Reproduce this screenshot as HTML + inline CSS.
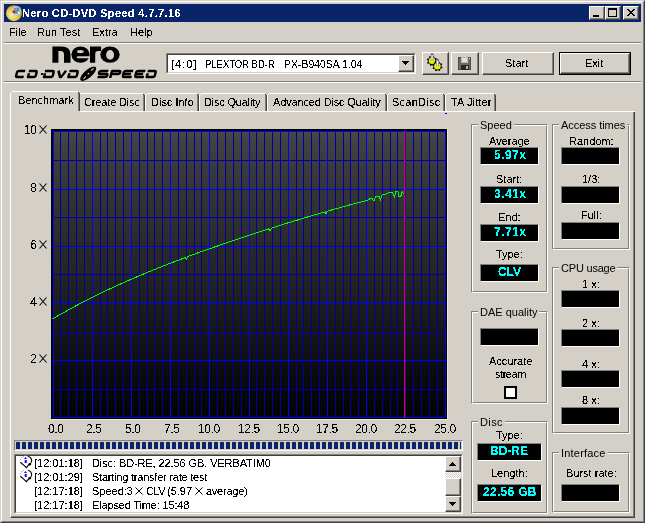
<!DOCTYPE html>
<html><head><meta charset="utf-8">
<style>
*{margin:0;padding:0;box-sizing:border-box}
html,body{width:645px;height:523px;overflow:hidden;background:#d4d0c8}
body{position:relative;font-family:"Liberation Sans",sans-serif;font-size:11px;color:#000}
.a{position:absolute}
.t{position:absolute;white-space:nowrap;line-height:13px;font-size:11px;filter:url(#crisp)}
.btn{position:absolute;background:#d4d0c8;border-top:1px solid #fff;border-left:1px solid #fff;border-right:1px solid #404040;border-bottom:1px solid #404040}
.btn>i{position:absolute;left:0;top:0;right:0;bottom:0;border-right:1px solid #808080;border-bottom:1px solid #808080}
.sunk{position:absolute;border-top:1px solid #808080;border-left:1px solid #808080;border-right:1px solid #fff;border-bottom:1px solid #fff}
.sunk>i{position:absolute;left:0;top:0;right:0;bottom:0;border-top:1px solid #404040;border-left:1px solid #404040;border-right:1px solid #d4d0c8;border-bottom:1px solid #d4d0c8}
.grp{position:absolute;border-top:1px solid #808080;border-left:1px solid #808080;border-right:1px solid #fff;border-bottom:1px solid #fff}
.grp>i{position:absolute;left:0;top:0;right:0;bottom:0;border-top:1px solid #fff;border-left:1px solid #fff;border-right:1px solid #808080;border-bottom:1px solid #808080}
.lab{position:absolute;white-space:nowrap;line-height:13px;background:#d4d0c8;padding:0 2px;filter:url(#crisp)}
.box{position:absolute;background:#000;border-top:1px solid #808080;border-left:1px solid #808080;border-right:1px solid #fff;border-bottom:1px solid #fff;width:59px;height:18px}
.val{position:absolute;left:0;right:0;text-align:center;color:#00ffff;font-weight:bold;font-size:12px;line-height:14px;top:0px;filter:url(#crisp)}
.c{text-align:center}
.tab{position:absolute;top:93px;height:18px;border-top:1px solid #fff;border-left:1px solid #fff}
.tab>b{position:absolute;top:0;bottom:0;right:-1px;width:1px;background:#404040}
.tab>i{position:absolute;top:0;bottom:0;right:0;width:1px;background:#808080}
</style></head><body>
<svg width="0" height="0" style="position:absolute"><filter id="crisp" x="-5%" y="-5%" width="110%" height="110%" color-interpolation-filters="sRGB"><feComponentTransfer><feFuncA type="discrete" tableValues="0 0 0 0 0 0 0 0 0 1 1 1 1 1 1 1 1 1 1 1"/></feComponentTransfer></filter></svg>

<!-- window frame -->
<div class="a" style="left:0;top:0;width:645px;height:523px;border-top:1px solid #d4d0c8;border-left:1px solid #d4d0c8;border-right:1px solid #404040;border-bottom:1px solid #404040"></div>
<div class="a" style="left:1px;top:1px;width:643px;height:521px;border-top:1px solid #fff;border-left:1px solid #fff;border-right:1px solid #808080;border-bottom:1px solid #808080"></div>

<!-- title bar -->
<div class="a" style="left:4px;top:4px;width:637px;height:18px;background:#0a246a"></div>
<svg class="a" style="left:6px;top:5px" width="17" height="17" viewBox="6 5 17 17">
  <defs><radialGradient id="gold" cx="0.4" cy="0.6" r="0.6"><stop offset="0" stop-color="#f8f0c0"/><stop offset="0.55" stop-color="#e8d050"/><stop offset="1" stop-color="#b89818"/></radialGradient></defs>
  <circle cx="14" cy="13.2" r="8" fill="url(#gold)"/>
  <circle cx="16.3" cy="10.8" r="4.9" fill="#b8b8c0"/>
  <circle cx="16.3" cy="10.8" r="3.9" fill="#e8e8f0"/>
  <circle cx="16.3" cy="10.8" r="3.3" fill="#3898e0"/>
  <path d="M14.2,10.2 L17.2,7.6 L18,8.4 L15.4,11.6 L16.6,12.6 L15.8,13.2 Z" fill="#f07848"/>
  <circle cx="13.9" cy="11.8" r="1.3" fill="#c01808"/>
  <circle cx="13.6" cy="9.6" r=".8" fill="#f0d000"/>
  <circle cx="18.4" cy="8.6" r="1" fill="#30a040"/>
  <circle cx="18.6" cy="12.4" r="1" fill="#f8f8f8"/>
</svg>
<div class="t" style="left:22px;top:7px;color:#fff;font-weight:bold;letter-spacing:0.35px">Nero CD-DVD Speed 4.7.7.16</div>
<!-- caption buttons -->
<div class="btn" style="left:589px;top:6px;width:16px;height:14px"><i></i></div>
<div class="a" style="left:593px;top:15px;width:6px;height:2px;background:#000"></div>
<div class="btn" style="left:605px;top:6px;width:16px;height:14px"><i></i></div>
<div class="a" style="left:608px;top:8px;width:9px;height:9px;border:1px solid #000;border-top-width:2px"></div>
<div class="btn" style="left:623px;top:6px;width:16px;height:14px"><i></i></div>
<svg class="a" style="left:627px;top:9px" width="8" height="7" viewBox="0 0 8 7" shape-rendering="crispEdges">
  <path d="M0 0h2v1h-2zM6 0h2v1h-2zM1 1h2v1h-2zM5 1h2v1h-2zM2 2h4v1h-4zM3 3h2v1h-2zM2 4h4v1h-4zM1 5h2v1h-2zM5 5h2v1h-2zM0 6h2v1h-2zM6 6h2v1h-2z" fill="#000"/>
</svg>

<!-- menu -->
<div class="t" style="left:9px;top:26px">File</div>
<div class="t" style="left:37px;top:26px">Run Test</div>
<div class="t" style="left:92px;top:26px">Extra</div>
<div class="t" style="left:130px;top:26px">Help</div>
<div class="a" style="left:4px;top:42px;width:637px;height:1px;background:#808080"></div>
<div class="a" style="left:4px;top:43px;width:637px;height:1px;background:#fff"></div>

<!-- logo -->
<svg class="a" style="left:0;top:40px" width="170" height="42" viewBox="0 40 170 42">
  <path d="M52.4,62.8 V46.4 H61.5 Q70.5,46.4 70.5,54.5 V62.8 H64 V54.5 Q64,51 60.8,51 H58.4 V62.8 Z" fill="#000"/>
  <ellipse cx="80.5" cy="54.6" rx="9.1" ry="8.2" fill="#000"/>
  <path d="M77,51.6 Q77,50.1 80.4,50.1 Q83.8,50.1 83.8,51.6 Q83.8,53.2 80.4,53.2 Q77,53.2 77,51.6 Z" fill="#d4d0c8"/>
  <path d="M76.7,57.3 Q76.7,56.3 78,56.3 H91 V58.3 H78 Q76.7,58.3 76.7,57.3 Z" fill="#d4d0c8"/>
  <path d="M90,62.8 V46.4 H101.1 V51 H98 Q95.2,51 95.2,54 V62.8 Z" fill="#000"/>
  <ellipse cx="110" cy="54.6" rx="9.7" ry="8.2" fill="#000"/>
  <ellipse cx="110.1" cy="54.9" rx="4" ry="4.8" fill="#d4d0c8"/>
  <g transform="translate(18.450,0) skewX(-14)"><path d="M24.4,71 H18.09865600568636 Q16.59865600568636,71 16.59865600568636,72.5 V75.5 Q16.59865600568636,77 18.09865600568636,77 H24.4 M28.69865600568636,73.2 V77 H34.70134399431364 Q36.20134399431364,77 36.20134399431364,75.5 V72.5 Q36.20134399431364,71 34.70134399431364,71 H28.098656005686358 M44.79865600568636,73.2 V77 H51.70134399431364 Q53.20134399431364,77 53.20134399431364,75.5 V72.5 Q53.20134399431364,71 51.70134399431364,71 H44.19865600568636 M57.59865600568636,70.6 L60.79999999999999,77 H61.99999999999999 L65.20134399431363,70.6 M69.19865600568637,73.2 V77 H75.70134399431363 Q77.20134399431363,77 77.20134399431363,75.5 V72.5 Q77.20134399431363,71 75.70134399431363,71 H68.59865600568638 M107.60134399431364,71 H100.29865600568637 Q98.79865600568637,71 98.79865600568637,72.5 Q98.79865600568637,74 100.29865600568637,74 H106.10134399431364 Q107.60134399431364,74 107.60134399431364,75.5 Q107.60134399431364,77 106.10134399431364,77 H98.29865600568637 M111.19865600568637,78 V71 H118.30134399431363 Q119.80134399431363,71 119.80134399431363,72.5 Q119.80134399431363,74 118.30134399431363,74 H111.19865600568637 M132.4,71 H124.89865600568636 Q123.39865600568636,71 123.39865600568636,72.5 V75.5 Q123.39865600568636,77 124.89865600568636,77 H132.4 M123.39865600568636,74 H130.9 M144.6,71 H137.29865600568635 Q135.79865600568635,71 135.79865600568635,72.5 V75.5 Q135.79865600568635,77 137.29865600568635,77 H144.6 M135.79865600568635,74 H143.1 M147.49865600568634,73.2 V77 H153.70134399431365 Q155.20134399431365,77 155.20134399431365,75.5 V72.5 Q155.20134399431365,71 153.70134399431365,71 H146.89865600568635" fill="none" stroke="#000" stroke-width="2.5" stroke-linejoin="round"/><rect x="41.00" y="73" width="2" height="2" fill="#000"/></g>
  <ellipse cx="88.2" cy="73.7" rx="10" ry="3.9" transform="rotate(-41 88.2 73.7)" fill="#000"/>
  <path d="M83.4,78.8 L86,76.3 M87.7,74.4 L89.2,73 M90.9,70.6 L93.6,68.2" stroke="#d4d0c8" stroke-width="1.1" fill="none"/>
</svg>
<div class="a" style="left:4px;top:81px;width:637px;height:1px;background:#808080"></div>
<div class="a" style="left:4px;top:82px;width:637px;height:1px;background:#fff"></div>

<!-- drive combo -->
<div class="sunk" style="left:166px;top:53px;width:250px;height:21px;background:#fff"><i></i></div>
<div class="t" style="left:171px;top:58px;letter-spacing:1px">[4:0]</div>
<div class="t" style="left:205px;top:58px;transform:scaleX(0.86);transform-origin:0 0">PLEXTOR BD-R</div>
<div class="t" style="left:284px;top:58px;transform:scaleX(0.95);transform-origin:0 0">PX-B940SA 1.04</div>
<div class="btn" style="left:398px;top:55px;width:16px;height:17px"><i></i></div>
<svg class="a" style="left:402px;top:61px" width="7" height="4" shape-rendering="crispEdges"><path d="M0 0h7v1h-7zM1 1h5v1h-5zM2 2h3v1h-3zM3 3h1v1h-1z" fill="#000"/></svg>

<!-- tool buttons -->
<div class="btn" style="left:422px;top:52px;width:27px;height:23px"><i></i></div>
<svg class="a" style="left:0;top:0" width="460" height="80">
  <path d="M437.10,61.83 L436.80,62.81 L435.32,63.03 L434.82,63.64 L434.87,65.13 L433.97,65.61 L432.77,64.73 L431.99,64.80 L430.97,65.90 L429.99,65.60 L429.77,64.12 L429.16,63.62 L427.67,63.67 L427.19,62.77 L428.07,61.57 L428.00,60.79 L426.90,59.77 L427.20,58.79 L428.68,58.57 L429.18,57.96 L429.13,56.47 L430.03,55.99 L431.23,56.87 L432.01,56.80 L433.03,55.70 L434.01,56.00 L434.23,57.48 L434.84,57.98 L436.33,57.93 L436.81,58.83 L435.93,60.03 L436.00,60.81Z" fill="#000"/>
  <circle cx="432" cy="60.8" r="3.3" fill="#f0f000"/>
  <path d="M442.50,67.23 L442.20,68.21 L440.72,68.43 L440.22,69.04 L440.27,70.53 L439.37,71.01 L438.17,70.13 L437.39,70.20 L436.37,71.30 L435.39,71.00 L435.17,69.52 L434.56,69.02 L433.07,69.07 L432.59,68.17 L433.47,66.97 L433.40,66.19 L432.30,65.17 L432.60,64.19 L434.08,63.97 L434.58,63.36 L434.53,61.87 L435.43,61.39 L436.63,62.27 L437.41,62.20 L438.43,61.10 L439.41,61.40 L439.63,62.88 L440.24,63.38 L441.73,63.33 L442.21,64.23 L441.33,65.43 L441.40,66.21Z" fill="#000"/>
  <circle cx="437.4" cy="66.2" r="3.3" fill="#f0f000"/>
  <rect x="430.6" y="54.6" width="3" height="6.2" fill="#8888a0"/>
  <rect x="431.4" y="55" width="1.3" height="5.6" fill="#f0f0fa"/>
  <rect x="431" y="53.6" width="2.2" height="1.2" fill="#404040"/>
  <rect x="436" y="60" width="3" height="6.2" fill="#8888a0"/>
  <rect x="436.8" y="60.4" width="1.3" height="5.6" fill="#f0f0fa"/>
  <rect x="436.4" y="59" width="2.2" height="1.2" fill="#404040"/>
</svg>
<div class="btn" style="left:451px;top:52px;width:28px;height:23px"><i></i></div>
<svg class="a" style="left:458px;top:57px" width="14" height="14" viewBox="0 0 14 14" shape-rendering="crispEdges">
  <rect x="0" y="0" width="13" height="13" fill="#4a4a4a"/>
  <rect x="1" y="1" width="11" height="11" fill="#6a6a6a"/>
  <rect x="3" y="0" width="7" height="6" fill="#b8b8b8"/>
  <rect x="4" y="1" width="5" height="4" fill="#e0e0e0"/>
  <rect x="11" y="1" width="1" height="1" fill="#f0f0f0"/>
  <rect x="3" y="8" width="8" height="5" fill="#282828"/>
  <rect x="8" y="9" width="2" height="3" fill="#b0b0b0"/>
</svg>
<div class="btn" style="left:482px;top:52px;width:72px;height:23px"><i></i></div>
<div class="t" style="left:505px;top:57px">Start</div>
<div class="a" style="left:559px;top:52px;width:72px;height:23px;border:1px solid #000"></div>
<div class="btn" style="left:560px;top:53px;width:70px;height:21px"><i></i></div>
<div class="t" style="left:585px;top:57px">Exit</div>

<!-- tabs -->
<!-- panel -->
<div class="a" style="left:10px;top:111px;width:625px;height:407px;border-top:1px solid #fff;border-left:1px solid #fff;border-right:1px solid #404040;border-bottom:1px solid #404040"></div>
<div class="a" style="left:11px;top:112px;width:623px;height:405px;border-right:1px solid #808080;border-bottom:1px solid #808080"></div>
<svg class="a" style="left:0;top:0" width="645" height="120" shape-rendering="crispEdges">
<rect x="80" y="93" width="63" height="1" fill="#fff"/>
<rect x="79" y="94" width="1" height="1" fill="#fff"/>
<rect x="78" y="95" width="1" height="16" fill="#fff"/>
<rect x="143" y="94" width="1" height="1" fill="#404040"/>
<rect x="143" y="95" width="1" height="16" fill="#808080"/>
<rect x="144" y="95" width="1" height="16" fill="#404040"/>
<rect x="147" y="93" width="50" height="1" fill="#fff"/>
<rect x="146" y="94" width="1" height="1" fill="#fff"/>
<rect x="145" y="95" width="1" height="16" fill="#fff"/>
<rect x="197" y="94" width="1" height="1" fill="#404040"/>
<rect x="197" y="95" width="1" height="16" fill="#808080"/>
<rect x="198" y="95" width="1" height="16" fill="#404040"/>
<rect x="201" y="93" width="64" height="1" fill="#fff"/>
<rect x="200" y="94" width="1" height="1" fill="#fff"/>
<rect x="199" y="95" width="1" height="16" fill="#fff"/>
<rect x="265" y="94" width="1" height="1" fill="#404040"/>
<rect x="265" y="95" width="1" height="16" fill="#808080"/>
<rect x="266" y="95" width="1" height="16" fill="#404040"/>
<rect x="269" y="93" width="116" height="1" fill="#fff"/>
<rect x="268" y="94" width="1" height="1" fill="#fff"/>
<rect x="267" y="95" width="1" height="16" fill="#fff"/>
<rect x="385" y="94" width="1" height="1" fill="#404040"/>
<rect x="385" y="95" width="1" height="16" fill="#808080"/>
<rect x="386" y="95" width="1" height="16" fill="#404040"/>
<rect x="389" y="93" width="54" height="1" fill="#fff"/>
<rect x="388" y="94" width="1" height="1" fill="#fff"/>
<rect x="387" y="95" width="1" height="16" fill="#fff"/>
<rect x="443" y="94" width="1" height="1" fill="#404040"/>
<rect x="443" y="95" width="1" height="16" fill="#808080"/>
<rect x="444" y="95" width="1" height="16" fill="#404040"/>
<rect x="447" y="93" width="47" height="1" fill="#fff"/>
<rect x="446" y="94" width="1" height="1" fill="#fff"/>
<rect x="445" y="95" width="1" height="16" fill="#fff"/>
<rect x="494" y="94" width="1" height="1" fill="#404040"/>
<rect x="494" y="95" width="1" height="16" fill="#808080"/>
<rect x="495" y="95" width="1" height="16" fill="#404040"/>
<rect x="10" y="111" width="625" height="1" fill="#fff"/>
<rect x="10" y="92" width="70" height="20" fill="#d4d0c8"/>
<rect x="12" y="91" width="66" height="1" fill="#fff"/>
<rect x="11" y="92" width="1" height="1" fill="#fff"/>
<rect x="10" y="93" width="1" height="19" fill="#fff"/>
<rect x="78" y="92" width="1" height="1" fill="#404040"/>
<rect x="78" y="93" width="1" height="18" fill="#808080"/>
<rect x="79" y="93" width="1" height="18" fill="#404040"/>
</svg>
<div class="t" style="left:18px;top:94px">Benchmark</div>
<div class="t" style="left:84px;top:96px;letter-spacing:-0.15px">Create Disc</div>
<div class="t" style="left:151px;top:96px">Disc Info</div>
<div class="t" style="left:204px;top:96px;letter-spacing:-0.2px">Disc Quality</div>
<div class="t" style="left:273px;top:96px;letter-spacing:-0.15px">Advanced Disc Quality</div>
<div class="t" style="left:392px;top:96px;letter-spacing:0.25px">ScanDisc</div>
<div class="t" style="left:451px;top:96px;letter-spacing:0.1px">TA Jitter</div>

<div class="a" style="left:445px;top:113px;width:2px;height:1px;background:#0000ff"></div>
<!-- chart -->
<svg class="a" style="left:0;top:0" width="645" height="523" shape-rendering="crispEdges">
  <defs>
    <linearGradient id="bg" x1="0" y1="0" x2="0" y2="1">
      <stop offset="0" stop-color="#484848"/>
      <stop offset="0.05" stop-color="#404040"/>
      <stop offset="0.17" stop-color="#373737"/>
      <stop offset="0.35" stop-color="#2d2d2d"/>
      <stop offset="0.5" stop-color="#242424"/>
      <stop offset="0.64" stop-color="#1b1b1b"/>
      <stop offset="0.75" stop-color="#131313"/>
      <stop offset="0.87" stop-color="#0a0a0a"/>
      <stop offset="1" stop-color="#030303"/>
    </linearGradient>
  </defs>
  <rect x="51" y="129" width="396" height="290" fill="#000"/>
  <rect x="447" y="129" width="1" height="291" fill="#ece9e3"/>
  <rect x="51" y="419" width="397" height="1" fill="#ece9e3"/>
  <rect x="53" y="131" width="393" height="287" fill="url(#bg)"/>
  <g id="grid">
<rect x="53" y="131" width="393" height="1" fill="#0000ff"/>
<rect x="53" y="160" width="393" height="1" fill="#0000a0"/>
<rect x="53" y="189" width="393" height="1" fill="#0000ff"/>
<rect x="53" y="217" width="393" height="1" fill="#0000a0"/>
<rect x="53" y="246" width="393" height="1" fill="#0000ff"/>
<rect x="53" y="274" width="393" height="1" fill="#0000a0"/>
<rect x="53" y="303" width="393" height="1" fill="#0000ff"/>
<rect x="53" y="332" width="393" height="1" fill="#0000a0"/>
<rect x="53" y="360" width="393" height="1" fill="#0000ff"/>
<rect x="53" y="389" width="393" height="1" fill="#0000a0"/>
<rect x="53" y="417" width="393" height="1" fill="#0000ff"/>
<rect x="53" y="131" width="1" height="287" fill="#0000ff"/>
<rect x="60" y="131" width="1" height="287" fill="#0000a0"/>
<rect x="68" y="131" width="1" height="287" fill="#0000a0"/>
<rect x="76" y="131" width="1" height="287" fill="#0000a0"/>
<rect x="84" y="131" width="1" height="287" fill="#0000a0"/>
<rect x="92" y="131" width="1" height="287" fill="#0000ff"/>
<rect x="100" y="131" width="1" height="287" fill="#0000a0"/>
<rect x="107" y="131" width="1" height="287" fill="#0000a0"/>
<rect x="115" y="131" width="1" height="287" fill="#0000a0"/>
<rect x="123" y="131" width="1" height="287" fill="#0000a0"/>
<rect x="131" y="131" width="1" height="287" fill="#0000ff"/>
<rect x="139" y="131" width="1" height="287" fill="#0000a0"/>
<rect x="147" y="131" width="1" height="287" fill="#0000a0"/>
<rect x="154" y="131" width="1" height="287" fill="#0000a0"/>
<rect x="162" y="131" width="1" height="287" fill="#0000a0"/>
<rect x="170" y="131" width="1" height="287" fill="#0000ff"/>
<rect x="178" y="131" width="1" height="287" fill="#0000a0"/>
<rect x="186" y="131" width="1" height="287" fill="#0000a0"/>
<rect x="194" y="131" width="1" height="287" fill="#0000a0"/>
<rect x="201" y="131" width="1" height="287" fill="#0000a0"/>
<rect x="209" y="131" width="1" height="287" fill="#0000ff"/>
<rect x="217" y="131" width="1" height="287" fill="#0000a0"/>
<rect x="225" y="131" width="1" height="287" fill="#0000a0"/>
<rect x="233" y="131" width="1" height="287" fill="#0000a0"/>
<rect x="241" y="131" width="1" height="287" fill="#0000a0"/>
<rect x="249" y="131" width="1" height="287" fill="#0000ff"/>
<rect x="256" y="131" width="1" height="287" fill="#0000a0"/>
<rect x="264" y="131" width="1" height="287" fill="#0000a0"/>
<rect x="272" y="131" width="1" height="287" fill="#0000a0"/>
<rect x="280" y="131" width="1" height="287" fill="#0000a0"/>
<rect x="288" y="131" width="1" height="287" fill="#0000ff"/>
<rect x="296" y="131" width="1" height="287" fill="#0000a0"/>
<rect x="303" y="131" width="1" height="287" fill="#0000a0"/>
<rect x="311" y="131" width="1" height="287" fill="#0000a0"/>
<rect x="319" y="131" width="1" height="287" fill="#0000a0"/>
<rect x="327" y="131" width="1" height="287" fill="#0000ff"/>
<rect x="335" y="131" width="1" height="287" fill="#0000a0"/>
<rect x="343" y="131" width="1" height="287" fill="#0000a0"/>
<rect x="350" y="131" width="1" height="287" fill="#0000a0"/>
<rect x="358" y="131" width="1" height="287" fill="#0000a0"/>
<rect x="366" y="131" width="1" height="287" fill="#0000ff"/>
<rect x="374" y="131" width="1" height="287" fill="#0000a0"/>
<rect x="382" y="131" width="1" height="287" fill="#0000a0"/>
<rect x="390" y="131" width="1" height="287" fill="#0000a0"/>
<rect x="397" y="131" width="1" height="287" fill="#0000a0"/>
<rect x="405" y="131" width="1" height="287" fill="#0000ff"/>
<rect x="413" y="131" width="1" height="287" fill="#0000a0"/>
<rect x="421" y="131" width="1" height="287" fill="#0000a0"/>
<rect x="429" y="131" width="1" height="287" fill="#0000a0"/>
<rect x="437" y="131" width="1" height="287" fill="#0000a0"/>
<rect x="445" y="131" width="1" height="287" fill="#0000ff"/>
  </g>
  <rect x="404" y="131" width="1" height="287" fill="#ff0000"/>
  <polyline shape-rendering="crispEdges" fill="none" stroke="#00ff00" stroke-width="1" points="52.5,319.0 55.5,317.2 58.5,315.5 61.5,313.8 64.5,312.1 67.5,310.4 70.5,308.8 73.5,307.1 76.5,305.5 79.5,303.9 82.5,302.4 85.5,300.8 88.5,299.3 91.5,297.8 94.5,296.3 97.5,294.8 100.5,293.3 103.5,291.9 106.5,290.4 109.5,289.0 112.5,287.6 115.5,286.2 118.5,284.9 121.5,283.5 124.5,282.2 127.5,280.9 130.5,279.5 133.5,278.2 136.5,277.0 139.5,275.7 142.5,274.4 145.5,273.2 148.5,271.9 151.5,270.7 154.5,269.5 157.5,268.3 160.5,267.1 163.5,265.9 166.5,264.7 169.5,263.6 172.5,262.4 175.5,261.2 178.5,260.1 181.5,259.0 184.5,257.8 185.3,257.5 186.7,259.2 187.5,256.7 188.0,256.5 190.5,255.6 193.5,254.5 196.5,253.4 199.5,252.3 202.5,251.3 205.5,250.2 208.5,249.1 211.5,248.1 214.5,247.0 217.5,246.0 220.5,244.9 223.5,243.9 226.5,242.8 229.5,241.8 232.5,240.8 235.5,239.8 238.5,238.8 241.5,237.8 244.5,236.8 247.5,235.8 250.5,234.8 253.5,233.8 256.5,232.9 259.5,231.9 262.5,230.9 265.5,229.9 268.5,229.0 268.7,228.9 270.2,230.8 271.5,228.0 271.7,228.0 274.5,227.1 277.5,226.1 280.5,225.2 283.5,224.3 286.5,223.3 289.5,222.4 292.5,221.5 295.5,220.6 298.5,219.7 301.5,218.8 304.5,217.9 307.5,217.0 310.5,216.1 313.5,215.2 316.5,214.3 319.5,213.5 322.5,212.6 324.7,212.0 325.5,211.7 326.1,213.9 327.7,211.1 328.5,210.9 331.5,210.0 334.5,209.2 337.5,208.3 340.5,207.5 343.5,206.7 346.5,205.9 349.5,205.0 352.5,204.2 355.5,203.4 358.5,202.6 361.5,201.9 364.5,201.1 368.4,199.8 369.6,198.8 372.3,198.8 373.8,201.0 375.4,196.9 379.3,196.7 380.4,199.8 382.0,195.0 385.9,194.2 389.0,192.6 392.4,192.6 394.4,196.7 395.9,191.9 397.9,191.9 399.0,197.1 401.4,195.4 402.1,191.1 403.3,193.8"/>
</svg>
<!-- y labels -->
<div class="t" style="left:0;width:37px;text-align:right;top:123px;font-size:12px;line-height:14px">10</div>
<svg class="a" style="left:39px;top:125px" width="8" height="9" viewBox="0 0 8 9"><path d="M0.5 0.5 L7.5 8.5 M7.5 0.5 L0.5 8.5" stroke="#000" stroke-width="1.05" fill="none"/></svg>
<div class="t" style="left:0;width:37px;text-align:right;top:181px;font-size:12px;line-height:14px">8</div>
<svg class="a" style="left:39px;top:183px" width="8" height="9" viewBox="0 0 8 9"><path d="M0.5 0.5 L7.5 8.5 M7.5 0.5 L0.5 8.5" stroke="#000" stroke-width="1.05" fill="none"/></svg>
<div class="t" style="left:0;width:37px;text-align:right;top:238px;font-size:12px;line-height:14px">6</div>
<svg class="a" style="left:39px;top:240px" width="8" height="9" viewBox="0 0 8 9"><path d="M0.5 0.5 L7.5 8.5 M7.5 0.5 L0.5 8.5" stroke="#000" stroke-width="1.05" fill="none"/></svg>
<div class="t" style="left:0;width:37px;text-align:right;top:295px;font-size:12px;line-height:14px">4</div>
<svg class="a" style="left:39px;top:297px" width="8" height="9" viewBox="0 0 8 9"><path d="M0.5 0.5 L7.5 8.5 M7.5 0.5 L0.5 8.5" stroke="#000" stroke-width="1.05" fill="none"/></svg>
<div class="t" style="left:0;width:37px;text-align:right;top:352px;font-size:12px;line-height:14px">2</div>
<svg class="a" style="left:39px;top:354px" width="8" height="9" viewBox="0 0 8 9"><path d="M0.5 0.5 L7.5 8.5 M7.5 0.5 L0.5 8.5" stroke="#000" stroke-width="1.05" fill="none"/></svg>
<!-- x labels -->
<div class="t" style="left:48px;top:422px;font-size:12px;line-height:14px;letter-spacing:-0.4px">0.0</div>
<div class="t" style="left:86px;top:422px;font-size:12px;line-height:14px;letter-spacing:-0.4px">2.5</div>
<div class="t" style="left:125px;top:422px;font-size:12px;line-height:14px;letter-spacing:-0.4px">5.0</div>
<div class="t" style="left:164px;top:422px;font-size:12px;line-height:14px;letter-spacing:-0.4px">7.5</div>
<div class="t" style="left:198px;top:422px;font-size:12px;line-height:14px;letter-spacing:-0.4px">10.0</div>
<div class="t" style="left:238px;top:422px;font-size:12px;line-height:14px;letter-spacing:-0.4px">12.5</div>
<div class="t" style="left:277px;top:422px;font-size:12px;line-height:14px;letter-spacing:-0.4px">15.0</div>
<div class="t" style="left:316px;top:422px;font-size:12px;line-height:14px;letter-spacing:-0.4px">17.5</div>
<div class="t" style="left:355px;top:422px;font-size:12px;line-height:14px;letter-spacing:-0.4px">20.0</div>
<div class="t" style="left:394px;top:422px;font-size:12px;line-height:14px;letter-spacing:-0.4px">22.5</div>
<div class="t" style="left:434px;top:422px;font-size:12px;line-height:14px;letter-spacing:-0.4px">25.0</div>

<!-- progress bar -->
<div class="a" style="left:14px;top:440px;width:449px;height:11px;border-top:1px solid #808080;border-left:1px solid #808080;border-right:1px solid #fff;border-bottom:1px solid #fff"></div>
<div class="a" style="left:16px;top:442px;width:445px;height:7px;background:repeating-linear-gradient(90deg,#0a246a 0,#0a246a 4px,transparent 4px,transparent 6px)"></div>

<!-- log -->
<div class="sunk" style="left:14px;top:454px;width:449px;height:60px;background:#fff"><i></i></div>
<svg class="a" style="left:16px;top:455px" width="18" height="14" viewBox="16 455 18 14">
  <path d="M20.5,459.5 Q21.5,456 25.5,455.8 Q30,455.8 31.6,459.8 Q32,462.5 29.5,464 L27.5,465.5 L26.3,467.6 L24.5,465.4 Q21.5,464.5 20.3,462.2 Z" fill="#fff"/>
  <path d="M27.8,456.3 Q31.6,457.2 31.7,460.8 L31.2,462.6 M31,462.8 L28,465.6 L26.4,467.6 L24,465.3 L20.3,462.3" stroke="#000" stroke-width="1.1" fill="none"/>
  <circle cx="29.7" cy="464.3" r="1.3" fill="#000"/>
  <circle cx="21.8" cy="457.6" r=".6" fill="#909090"/>
  <circle cx="20.6" cy="459.6" r=".6" fill="#b0b0b0"/>
  <circle cx="23.3" cy="456.3" r=".6" fill="#a0a0a0"/>
  <path d="M24,459 L25.5,457 L27,459 Z" fill="#0000ff"/>
  <rect x="24.7" y="460" width="2" height="3" fill="#0000ff"/>
</svg>
<svg class="a" style="left:16px;top:469px" width="18" height="14" viewBox="16 455 18 14">
  <path d="M20.5,459.5 Q21.5,456 25.5,455.8 Q30,455.8 31.6,459.8 Q32,462.5 29.5,464 L27.5,465.5 L26.3,467.6 L24.5,465.4 Q21.5,464.5 20.3,462.2 Z" fill="#fff"/>
  <path d="M27.8,456.3 Q31.6,457.2 31.7,460.8 L31.2,462.6 M31,462.8 L28,465.6 L26.4,467.6 L24,465.3 L20.3,462.3" stroke="#000" stroke-width="1.1" fill="none"/>
  <circle cx="29.7" cy="464.3" r="1.3" fill="#000"/>
  <circle cx="21.8" cy="457.6" r=".6" fill="#909090"/>
  <circle cx="20.6" cy="459.6" r=".6" fill="#b0b0b0"/>
  <circle cx="23.3" cy="456.3" r=".6" fill="#a0a0a0"/>
  <path d="M24,459 L25.5,457 L27,459 Z" fill="#0000ff"/>
  <rect x="24.7" y="460" width="2" height="3" fill="#0000ff"/>
</svg>
<div class="t" style="left:34px;top:457px">[12:01:18]</div>
<div class="t" style="left:92px;top:457px;letter-spacing:-0.1px">Disc: BD-RE, 22.56 GB, VERBATIM0</div>
<div class="t" style="left:34px;top:471px">[12:01:29]</div>
<div class="t" style="left:92px;top:471px;letter-spacing:-0.22px">Starting transfer rate test</div>
<div class="t" style="left:34px;top:485px">[12:17:18]</div>
<div class="t" style="left:92px;top:485px">Speed:3</div><svg class="a" style="left:135px;top:487px" width="8" height="8" viewBox="0 0 8 8"><path d="M0.5 0.5 L7.5 7.5 M7.5 0.5 L0.5 7.5" stroke="#000" stroke-width="1" fill="none"/></svg><div class="t" style="left:146px;top:485px;letter-spacing:-0.5px">CLV</div><div class="t" style="left:167px;top:485px">(5.97</div><svg class="a" style="left:195px;top:487px" width="8" height="8" viewBox="0 0 8 8"><path d="M0.5 0.5 L7.5 7.5 M7.5 0.5 L0.5 7.5" stroke="#000" stroke-width="1" fill="none"/></svg><div class="t" style="left:206px;top:485px;letter-spacing:-0.25px">average)</div>
<div class="t" style="left:34px;top:499px">[12:17:18]</div>
<div class="t" style="left:92px;top:499px;letter-spacing:-0.16px">Elapsed Time: 15:48</div>
<!-- scrollbar -->
<div class="a" style="left:445px;top:456px;width:16px;height:56px;background:repeating-conic-gradient(#d4d0c8 0 25%,#fff 0 50%) 0 0/2px 2px"></div>
<div class="btn" style="left:445px;top:456px;width:16px;height:16px"><i></i></div>
<svg class="a" style="left:449px;top:462px" width="7" height="4" shape-rendering="crispEdges"><path d="M3 0h1v1h-1zM2 1h3v1h-3zM1 2h5v1h-5zM0 3h7v1h-7z" fill="#000"/></svg>
<div class="btn" style="left:445px;top:478px;width:16px;height:18px"><i></i></div>
<div class="btn" style="left:445px;top:496px;width:16px;height:16px"><i></i></div>
<svg class="a" style="left:449px;top:502px" width="7" height="4" shape-rendering="crispEdges"><path d="M0 0h7v1h-7zM1 1h5v1h-5zM2 2h3v1h-3zM3 3h1v1h-1z" fill="#000"/></svg>

<!-- Speed group -->
<div class="grp" style="left:471px;top:124px;width:77px;height:169px"><i></i></div>
<div class="lab" style="left:478px;top:119px">Speed</div>
<div class="t" style="left:489px;top:135px">Average</div>
<div class="box" style="left:480px;top:147px"><div class="val" style="left:13px;right:auto;text-align:left;letter-spacing:0.45px">5.97x</div></div>
<div class="t" style="left:496px;top:173px">Start:</div>
<div class="box" style="left:480px;top:186px"><div class="val" style="left:13px;right:auto;text-align:left;letter-spacing:0.45px">3.41x</div></div>
<div class="t" style="left:498px;top:211px">End:</div>
<div class="box" style="left:480px;top:224px"><div class="val" style="left:13px;right:auto;text-align:left;letter-spacing:0.45px">7.71x</div></div>
<div class="t" style="left:496px;top:248px">Type:</div>
<div class="box" style="left:480px;top:264px"><div class="val" style="left:17px;right:auto;text-align:left;">CLV</div></div>

<!-- Access times group -->
<div class="grp" style="left:552px;top:124px;width:78px;height:126px"><i></i></div>
<div class="lab" style="left:559px;top:119px;letter-spacing:-0.05px">Access times</div>
<div class="t" style="left:569px;top:135px">Random:</div>
<div class="box" style="left:561px;top:147px"></div>
<div class="t" style="left:582px;top:173px">1/3:</div>
<div class="box" style="left:561px;top:186px"></div>
<div class="t" style="left:581px;top:209px">Full:</div>
<div class="box" style="left:561px;top:222px"></div>

<!-- CPU usage group -->
<div class="grp" style="left:552px;top:267px;width:78px;height:167px"><i></i></div>
<div class="lab" style="left:559px;top:262px;letter-spacing:-0.2px">CPU usage</div>
<div class="t" style="left:582px;top:278px">1 x:</div>
<div class="box" style="left:561px;top:290px"></div>
<div class="t" style="left:582px;top:317px">2 x:</div>
<div class="box" style="left:561px;top:329px"></div>
<div class="t" style="left:582px;top:358px">4 x:</div>
<div class="box" style="left:561px;top:370px"></div>
<div class="t" style="left:582px;top:394px">8 x:</div>
<div class="box" style="left:561px;top:407px"></div>

<!-- DAE quality group -->
<div class="grp" style="left:471px;top:311px;width:77px;height:93px"><i></i></div>
<div class="lab" style="left:478px;top:306px;letter-spacing:0px">DAE quality</div>
<div class="box" style="left:480px;top:328px"></div>
<div class="t" style="left:489px;top:355px">Accurate</div>
<div class="t" style="left:495px;top:368px;letter-spacing:-0.45px">stream</div>
<div class="a" style="left:504px;top:386px;width:13px;height:13px;background:#fff;border:2px solid #000"></div>

<!-- Disc group -->
<div class="grp" style="left:471px;top:421px;width:77px;height:93px"><i></i></div>
<div class="lab" style="left:478px;top:416px;letter-spacing:0.4px">Disc</div>
<div class="t" style="left:496px;top:429px">Type:</div>
<div class="box" style="left:477px;top:443px;width:65px"><div class="val" style="left:12px;right:auto;text-align:left;">BD-RE</div></div>
<div class="t" style="left:491px;top:467px">Length:</div>
<div class="box" style="left:477px;top:484px;width:65px"><div class="val" style="left:5px;right:auto;text-align:left;letter-spacing:0.3px">22.56 GB</div></div>

<!-- Interface group -->
<div class="grp" style="left:552px;top:452px;width:78px;height:61px"><i></i></div>
<div class="lab" style="left:559px;top:447px;letter-spacing:0.2px">Interface</div>
<div class="t" style="left:566px;top:467px">Burst rate:</div>
<div class="box" style="left:561px;top:484px"></div>

</body></html>
